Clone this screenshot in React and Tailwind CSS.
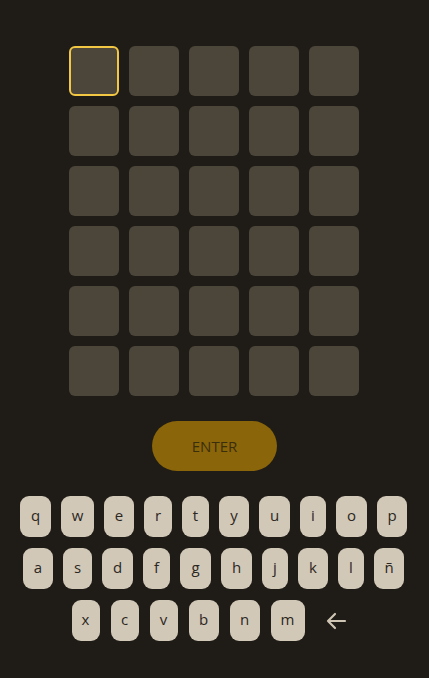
import React from "react";

const row1 = [
  { k: "q", w: "w-[31px]" },
  { k: "w", w: "w-[33px]" },
  { k: "e", w: "w-[30px]" },
  { k: "r", w: "w-[28px]" },
  { k: "t", w: "w-[27px]" },
  { k: "y", w: "w-[30px]" },
  { k: "u", w: "w-[31px]" },
  { k: "i", w: "w-[26px]" },
  { k: "o", w: "w-[31px]" },
  { k: "p", w: "w-[30px]" },
];
const row2 = [
  { k: "a", w: "w-[30px]" },
  { k: "s", w: "w-[29px]" },
  { k: "d", w: "w-[31px]" },
  { k: "f", w: "w-[27px]" },
  { k: "g", w: "w-[31px]" },
  { k: "h", w: "w-[31px]" },
  { k: "j", w: "w-[26px]" },
  { k: "k", w: "w-[30px]" },
  { k: "l", w: "w-[26px]" },
  { k: "ñ", w: "w-[30px]" },
];
const row3 = [
  { k: "x", w: "w-[28px]" },
  { k: "c", w: "w-[28px]" },
  { k: "v", w: "w-[28px]" },
  { k: "b", w: "w-[30px]" },
  { k: "n", w: "w-[30px]" },
  { k: "m", w: "w-[34px]" },
];

function Key({ k, w }) {
  return (
    <div
      className={`${w} h-[41px] rounded-[9px] bg-[#d2c8b8] text-[#2b2721] flex items-center justify-center text-[15px] leading-none pb-[2px]`}
    >
      {k}
    </div>
  );
}

export default function App() {
  const rows = [0, 1, 2, 3, 4, 5];
  const cols = [0, 1, 2, 3, 4];
  return (
    <div className="w-[429px] h-[678px] bg-[#1f1c17]">
      <div
        className="w-[428px] flex flex-col items-center pt-[46px]"
        style={{ fontFamily: '"Open Sans", "Noto Sans", sans-serif' }}
      >
        <div className="grid grid-cols-5 gap-[10px]">
          {rows.map((r) =>
            cols.map((c) => (
              <div
                key={`${r}-${c}`}
                className={
                  r === 0 && c === 0
                    ? "w-[50px] h-[50px] rounded-[6px] bg-[#4b4639] border-2 border-[#f2c744]"
                    : "w-[50px] h-[50px] rounded-[6px] bg-[#4b4639]"
                }
              />
            ))
          )}
        </div>

        <button className="mt-[25px] ml-[1px] w-[125px] h-[50px] rounded-full bg-[#8a6509] text-[#3b2e0c] text-[15px] flex items-center justify-center">
          ENTER
        </button>

        <div className="mt-[25px] flex flex-col items-center gap-[11px]">
          <div className="flex gap-[10px] mr-[1px]">
            {row1.map((x) => (
              <Key key={x.k} {...x} />
            ))}
          </div>
          <div className="flex gap-[10px] mr-[1px]">
            {row2.map((x) => (
              <Key key={x.k} {...x} />
            ))}
          </div>
          <div className="flex gap-[11px]">
            {row3.map((x) => (
              <Key key={x.k} {...x} />
            ))}
            <div className="w-[41px] h-[41px] flex items-center justify-center">
              <svg width="22" height="18" viewBox="0 0 22 18" fill="none">
                <path
                  d="M20 9H3M10 2L3 9l7 7"
                  stroke="#cfc5b4"
                  strokeWidth="2.2"
                  strokeLinecap="round"
                  strokeLinejoin="round"
                />
              </svg>
            </div>
          </div>
        </div>
      </div>
    </div>
  );
}
